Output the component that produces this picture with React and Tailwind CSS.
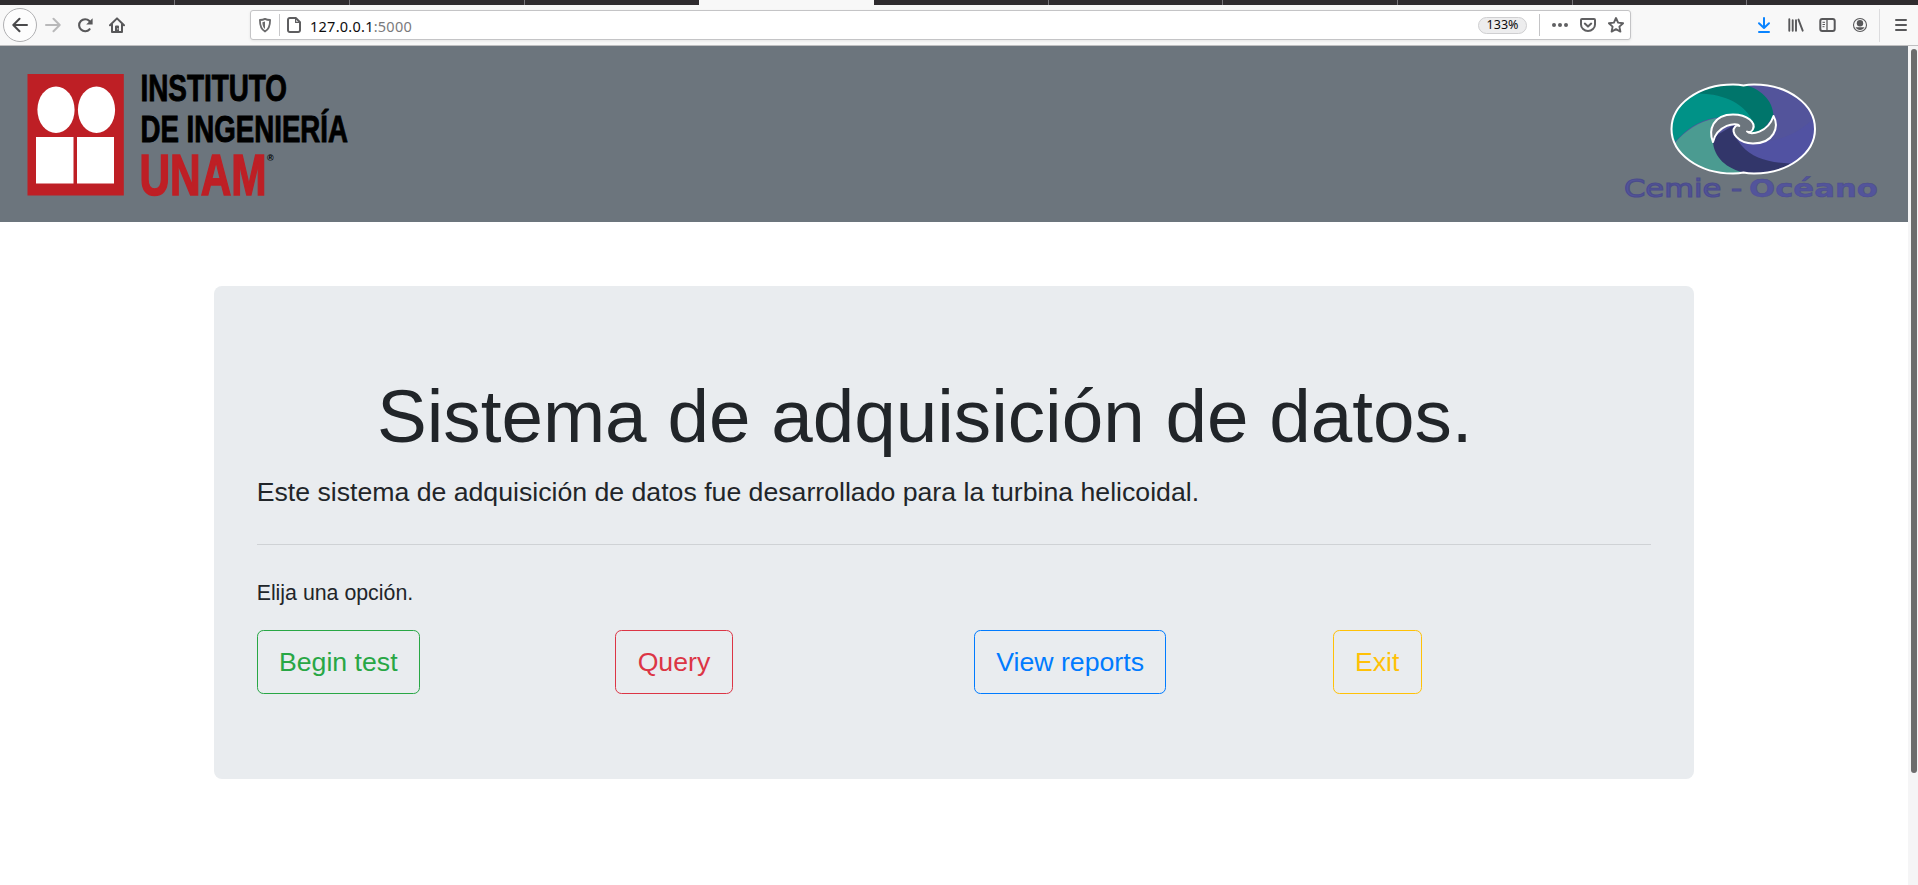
const ic = "shrink-0 block";

function Tabs() {
  const tabs = Array.from({ length: 11 });
  return (
    <div className="flex h-[5px] w-[1918px] overflow-hidden bg-[#2f2c2f] pl-[0.600px]">
      {tabs.map((_, i) => (
        <div
          key={i}
          className={
            i === 4
              ? "h-[5px] w-[174.700px] shrink-0 bg-[#f8f8f8]"
              : i === 3
              ? "h-[5px] w-[174.700px] shrink-0"
              : "h-[5px] w-[174.700px] shrink-0 border-r border-[#77757a]"
          }
        />
      ))}
    </div>
  );
}

function Toolbar() {
  return (
    <div className="flex h-[41px] w-[1918px] items-center border-b border-[#bfbfc1] bg-[#f8f8f8] pl-[3px] text-[#58585a]">
      <div className="flex h-[34px] w-[34px] shrink-0 items-center justify-center rounded-full border border-[#b0b0b2] bg-[#fdfdfd]">
        <svg className={ic} width="16" height="16" viewBox="0 0 16 16" fill="none" stroke="#4a4a4c" strokeWidth="2" strokeLinecap="round" strokeLinejoin="round">
          <path d="M15 8H1.5M7.5 1.8 1.3 8l6.2 6.2" />
        </svg>
      </div>
      <svg className="ml-2 block shrink-0" width="16" height="16" viewBox="0 0 16 16" fill="none" stroke="#b9b9ba" strokeWidth="2" strokeLinecap="round" strokeLinejoin="round">
        <path d="M1 8h13.5M8.5 1.8 14.7 8l-6.2 6.2" />
      </svg>
      <svg className="ml-4 block shrink-0" width="16" height="16" viewBox="0 0 16 16">
        <path d="M12.6 12.2A6 6 0 1 1 12.4 4" fill="none" stroke="#58585a" strokeWidth="2.1" strokeLinecap="round" />
        <path d="M15.6 1.2v6.2H9.2z" fill="#58585a" />
      </svg>
      <svg className="ml-4 block shrink-0" width="16" height="16" viewBox="0 0 16 16">
        <path d="M1 8.3 8 1.4l7 6.9" fill="none" stroke="#58585a" strokeWidth="2" strokeLinecap="round" strokeLinejoin="round" />
        <path d="M3 7v8h10V7" fill="none" stroke="#58585a" strokeWidth="2" strokeLinejoin="round" />
        <path d="M6 15V9.600a1 1 0 0 1 1-1h2a1 1 0 0 1 1 1V15zM8.300 11.200v1.200h1v-1.200z" fill="#58585a" fillRule="evenodd" />
      </svg>
      <div className="ml-[125px] flex h-[30px] w-[1381px] shrink-0 items-center rounded-[3px] border border-[#c4c4c6] bg-white pl-[7px] shadow-[0_1px_3px_rgba(0,0,0,0.08)]">
        <svg className={ic} width="14" height="16" viewBox="0 0 14 16">
          <path d="M7 1.900c1.700.9 3.400 1.100 5.100 1.100 0 6.200-1 9.300-5.100 11.500C2.900 12.300 1.900 9.200 1.900 3c1.700 0 3.400-.2 5.100-1.100z" fill="none" stroke="#6a6a6c" strokeWidth="1.800" strokeLinejoin="round" />
          <path d="M7 4.600v7.300C5 10.500 4.500 8.500 4.400 5.200z" fill="#6a6a6c" />
        </svg>
        <div className="ml-[7px] h-[22px] w-px bg-[#c8c8ca]" />
        <svg className="ml-[7px] block shrink-0" width="14" height="16" viewBox="0 0 14 16" fill="none" stroke="#5e5e60" strokeWidth="2" strokeLinejoin="round">
          <path d="M2.800 1h6l4.200 4.200v8a1.800 1.800 0 0 1-1.800 1.800H2.800A1.800 1.800 0 0 1 1 13.200V2.800A1.800 1.800 0 0 1 2.800 1z" />
          <path d="M8.600 1.200v4.200h4.200" strokeWidth="1.200" />
        </svg>
        <div className="ml-[9px] flex-1 pt-px font-['Noto_Sans',sans-serif] text-[14.500px] leading-5 tracking-[0.250px] text-[#0c0c0d]">
          127.0.0.1<span className="text-[#7a7a7c]">:5000</span>
        </div>
        <div className="flex h-[17px] w-[49px] items-center justify-center rounded-full border border-[#cfcfd1] bg-[#ededee] font-['Noto_Sans',sans-serif] text-[12.500px] text-[#0c0c0d]">
          133%
        </div>
        <div className="ml-3 h-[22px] w-px bg-[#c4c4c6]" />
        <svg className="ml-3 block shrink-0" width="16" height="16" viewBox="0 0 16 16" fill="#606062">
          <circle cx="2" cy="8" r="2" />
          <circle cx="8" cy="8" r="2" />
          <circle cx="14" cy="8" r="2" />
        </svg>
        <svg className="ml-3 block shrink-0" width="16" height="16" viewBox="0 0 16 16" fill="none" stroke="#606062" strokeWidth="2" strokeLinecap="round" strokeLinejoin="round">
          <path d="M2 2h12a1 1 0 0 1 1 1v4.500a7 6.500 0 0 1-14 0V3a1 1 0 0 1 1-1z" />
          <path d="M4.800 6.600 8 9.600l3.200-3" />
        </svg>
        <svg className="ml-3 mr-[6px] block shrink-0" width="16" height="16" viewBox="0 0 16 16" fill="none" stroke="#606062" strokeWidth="1.900" strokeLinejoin="round">
          <path d="m8 1 2.100 4.600 5 .6-3.700 3.400 1 5L8 12.100l-4.400 2.500 1-5L.9 6.200l5-.6z" />
        </svg>
      </div>
      <div className="ml-[125px] flex items-center">
        <svg className={ic} width="16" height="16" viewBox="0 0 16 16" fill="none" stroke="#0a84ff" strokeWidth="2" strokeLinecap="round" strokeLinejoin="round">
          <path d="M8 1v9.500M3 6.200l5 4.800 5-4.800M3 15h10" />
        </svg>
        <svg className="ml-[16px] block shrink-0" width="16" height="16" viewBox="0 0 16 16" fill="none" stroke="#58585a" strokeWidth="1.900" strokeLinecap="round">
          <path d="M1.300 2.300v11.400M4.700 3.300v10.400M8 3.300v10.400M10.500 2.600l4.200 11.100" />
        </svg>
        <svg className="ml-[15px] block shrink-0" width="17" height="16" viewBox="0 0 17 16" fill="none" stroke="#58585a" strokeWidth="2">
          <rect x="1.300" y="2" width="14.400" height="12" rx="2" />
          <path d="M8 2v12" strokeWidth="1.300" />
          <path d="M3.500 5.300H6M3.500 7.500H6M3.500 9.700H5.500" strokeWidth="1" />
        </svg>
        <svg className="ml-[16px] block shrink-0" width="16" height="16" viewBox="0 0 16 16">
          <circle cx="8" cy="8" r="6.500" fill="none" stroke="#58585a" strokeWidth="1.100" />
          <circle cx="8" cy="6.200" r="3.200" fill="#58585a" />
          <path d="M3.500 10.300h9a5.200 5.200 0 0 1-9 0z" fill="#58585a" />
        </svg>
        <div className="ml-[11px] h-[33px] w-px bg-[#dcdcde]" />
        <svg className="ml-[15px] block shrink-0" width="12" height="14" viewBox="0 0 12 14" fill="none" stroke="#58585a" strokeWidth="2" strokeLinecap="round">
          <path d="M1 2h10M1 7h10M1 12h10" />
        </svg>
      </div>
    </div>
  );
}

function InstituteLogo() {
  return (
    <svg className="block overflow-visible" width="330" height="152" viewBox="25 58 330 152" role="img" fontFamily="'Liberation Sans', sans-serif" fontWeight="700">
      <rect x="27.500" y="74" width="96.300" height="121.500" fill="#be1f25" />
      <ellipse cx="56" cy="109.800" rx="18.600" ry="23.300" fill="#fff" />
      <ellipse cx="96.500" cy="109.800" rx="18.600" ry="23.300" fill="#fff" />
      <rect x="36" y="137" width="37.500" height="46.500" fill="#fff" />
      <rect x="77" y="137" width="37" height="46.500" fill="#fff" />
      <text x="140.500" y="101" fontSize="37.500" stroke="#000" strokeWidth="0.900" textLength="146.500" lengthAdjust="spacingAndGlyphs">INSTITUTO</text>
      <text x="140.500" y="142" fontSize="37.500" stroke="#000" strokeWidth="0.900" textLength="207.500" lengthAdjust="spacingAndGlyphs">DE INGENIERÍA</text>
      <text x="139.500" y="195" fontSize="58" fill="#be1f25" stroke="#be1f25" strokeWidth="1.600" textLength="127" lengthAdjust="spacingAndGlyphs">UNAM</text>
      <text x="267" y="161" fontSize="9">®</text>
    </svg>
  );
}

const OUTLINE =
  "M133 24.500C98.800 24.500 71.500 44.500 71.500 69C71.500 93.600 98.800 113.500 133 113.500Q139 113.500 143.500 112.600Q148 113.500 154 113.500C188 113.500 215 93.600 215 69C215 44.500 188 24.500 154 24.500Q148 24.500 143.500 25.400Q139 24.500 133 24.500Z";

function OceanLogo() {
  return (
    <svg className="block overflow-visible" width="270" height="132" viewBox="20 18 270 132" role="img">
      <defs>
        <clipPath id="seal"><path d={OUTLINE} /></clipPath>
      </defs>
      <g clipPath="url(#seal)">
        <rect x="70" y="20" width="150" height="98" fill="#53549b" />
        <path d="M218 54C200 74 176 84 145 82L134 68L150 108L200 116L220 90Z" fill="#5152a2" />
        <path d="M139 62C128 68 134 76 142 86C152 98 170 103 190 103.500L180 118H130L105 100L112 78Z" fill="#32366a" />
        <path d="M74 84C86 70 98 62 116 58L113 82C114 97 126 109 146 113L130 118L70 112Z" fill="#4b9b91" />
        <path d="M100 33C80 36 66 50 68 84L76 81C88 68 99 61 114 58L133 56L154 62C150 48 130 34 100 33Z" fill="#009287" />
        <path d="M99 33.500L110 20H140L143.500 25C160 28 173 40 173.500 56L160 74L147 72L153 62C146 45 126 34 99 33.500Z" fill="#00756b" />
      </g>
      <path d="M113 82C108 70 113 54.500 133 54.500C148 54.500 156 63 153 69C152 72 149 72.700 147 71.500C150 75.500 168 73 173.500 56C179.500 67 174 83.500 153 83.500C138 83.500 130 71.500 135 67C136 65.500 138 65 139.300 66C137 61.500 117 65 113 82Z" fill="#6c757d" stroke="#fff" strokeWidth="2" strokeLinejoin="round" />
      <path d={OUTLINE} fill="none" stroke="#fff" strokeWidth="2" />
      <g fontFamily="'DejaVu Sans', sans-serif" fontSize="25" fill="#53549b" stroke="#4b4c8c">
        <text x="24" y="136.500" strokeWidth="1.200" fontWeight="400" textLength="118" lengthAdjust="spacingAndGlyphs">Cemie -</text>
        <text x="149" y="136.500" strokeWidth="0.500" fontWeight="700" textLength="129" lengthAdjust="spacingAndGlyphs">Océano</text>
      </g>
    </svg>
  );
}

function Option({ label, tone }) {
  return (
    <div className="w-[358.670px] shrink-0">
      <button className={"h-[63.300px] rounded-[6.400px] border px-[21.330px] text-[26.667px] leading-[40px] " + tone}>
        {label}
      </button>
    </div>
  );
}

export default function App() {
  return (
    <div className="h-[885px] w-[1918px] overflow-hidden bg-white font-['Liberation_Sans',Arial,sans-serif] text-[#212529]">
      <Tabs />
      <Toolbar />
      <div className="flex h-[839px]">
        <main className="w-[1908px]">
          <header className="flex h-[176px] items-start justify-between bg-[#6c757d] pl-[25px] pr-[18px]">
            <div className="pt-3"><InstituteLogo /></div>
            <div className="pt-8"><OceanLogo /></div>
          </header>
          <section className="ml-[214px] mt-16 h-[493px] w-[1480px] rounded-lg bg-[#e9ecef] px-[42.670px] pt-[85.700px]">
            <h1 className="mb-[10.670px] ml-[120.300px] whitespace-nowrap text-[74.667px] font-normal leading-[89.600px]">Sistema de adquisición de datos.</h1>
            <p className="text-[26.667px] leading-[40px]">Este sistema de adquisición de datos fue desarrollado para la turbina helicoidal.</p>
            <hr className="my-8 border-t border-[#cfd2d5]" />
            <p className="mb-[21.330px] text-[21.333px] leading-8">Elija una opción.</p>
            <div className="flex">
              <Option label="Begin test" tone="border-[#28a745] text-[#28a745]" />
              <Option label="Query" tone="border-[#dc3545] text-[#dc3545]" />
              <Option label="View reports" tone="border-[#007bff] text-[#007bff]" />
              <Option label="Exit" tone="border-[#ffc107] text-[#ffc107]" />
            </div>
          </section>
        </main>
        <div className="w-[10px] bg-[#f5f5f6] pl-[3px] pt-[3px]">
          <div className="h-[724px] w-[6px] rounded-full bg-[#6d6d6d]" />
        </div>
      </div>
    </div>
  );
}
